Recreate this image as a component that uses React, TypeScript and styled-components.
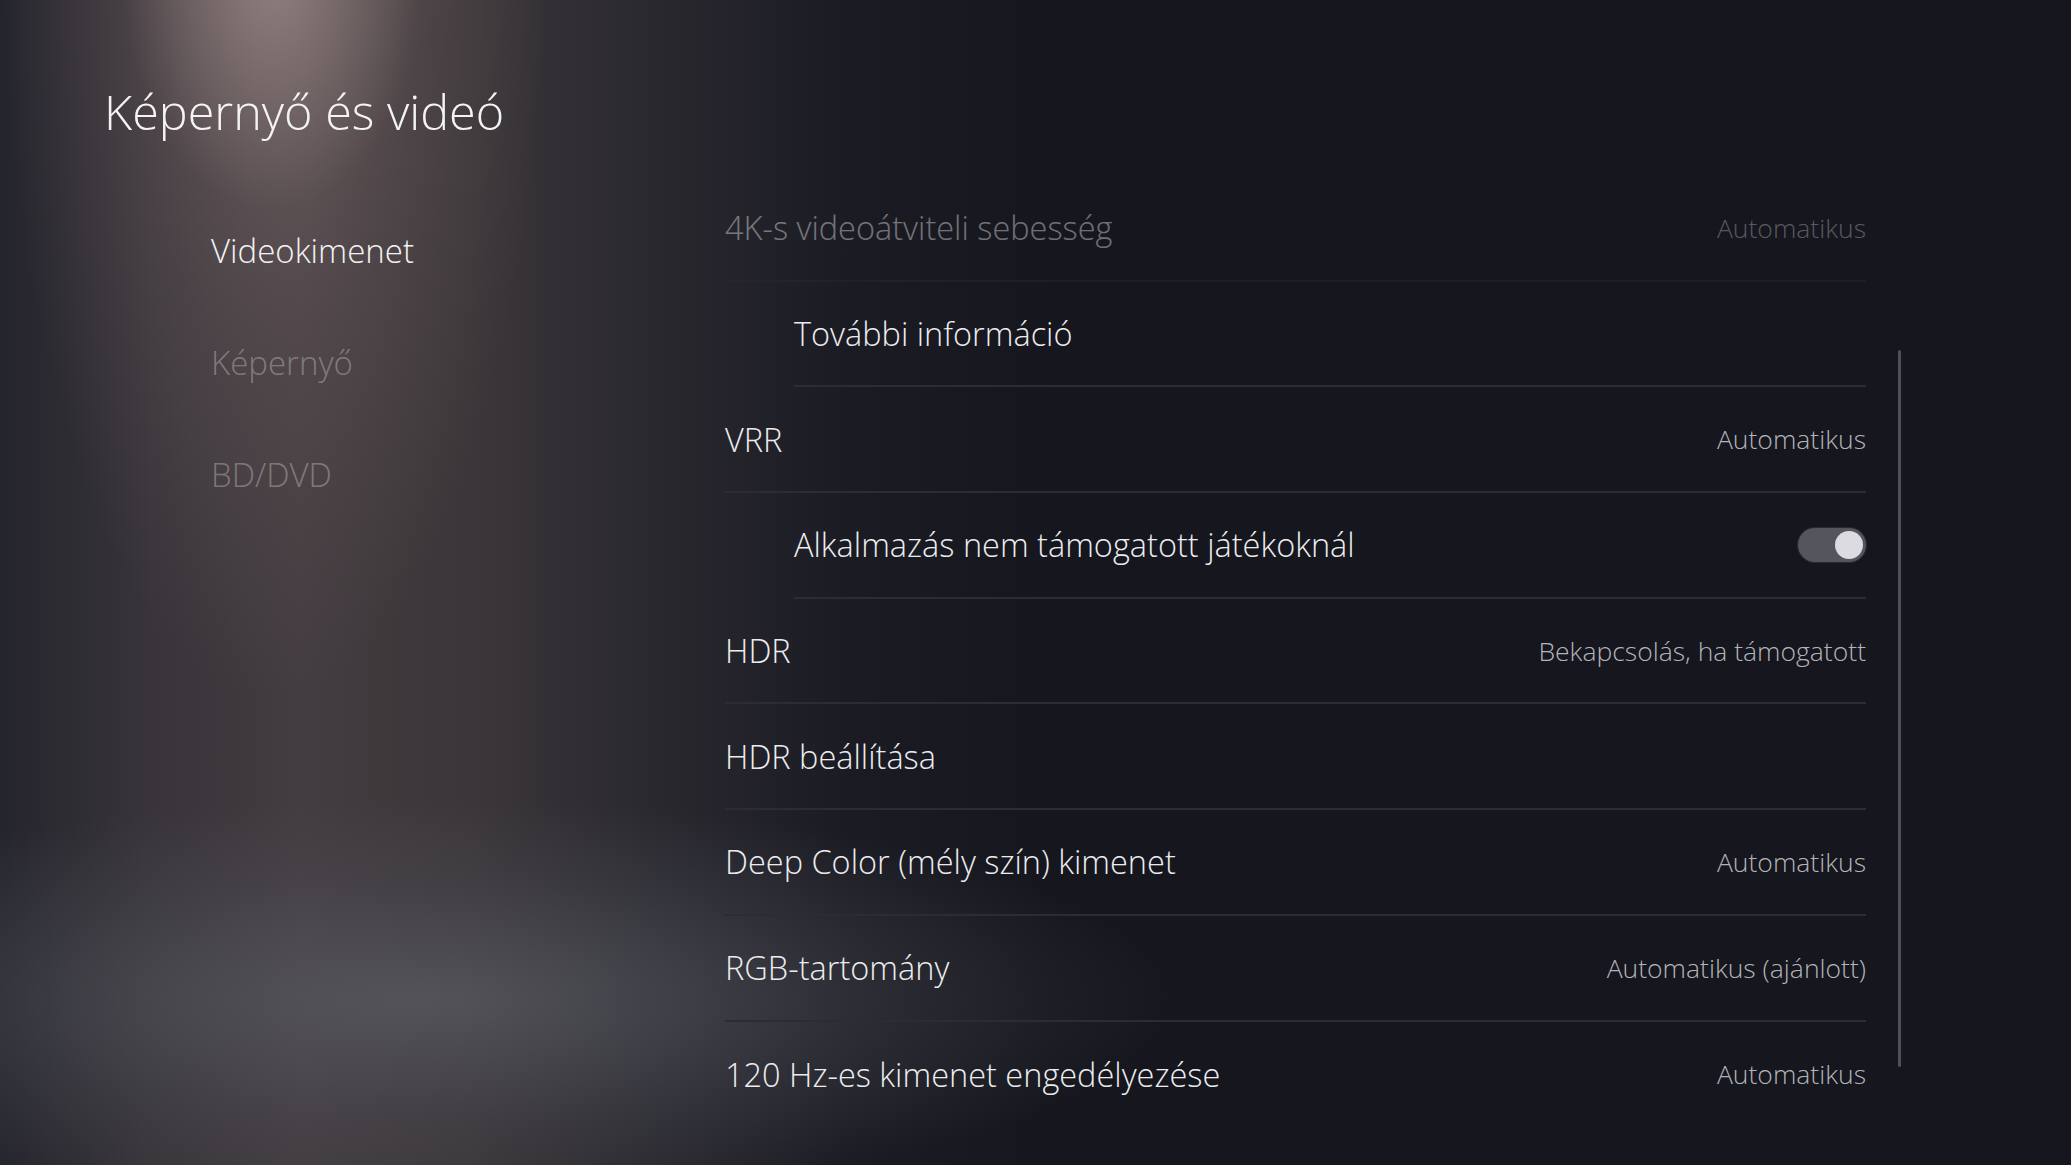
import React from "react";
import styled, { createGlobalStyle } from "styled-components";

const GlobalStyle = createGlobalStyle`
  html, body {
    margin: 0;
    padding: 0;
    background: #15161e;
  }

  * {
    box-sizing: border-box;
  }
`;

const colorBase = "#15161e";
const colorLabel = "#ececee";
const colorValue = "#b3b4b9";
const colorLine = "#2b2c35";

const StyledPage = styled.div`
  width: 2071px;
  height: 1165px;
  overflow: hidden;
  display: flex;
  font-family: "Open Sans", "Noto Sans", sans-serif;
  font-weight: 300;
  color: ${colorLabel};
  background-color: ${colorBase};
  background-image:
    radial-gradient(ellipse 150px 240px at 272px -30px, rgba(175, 155, 152, 0.55), rgba(175, 155, 152, 0) 100%),
    radial-gradient(ellipse 340px 950px at 275px -60px, rgba(135, 116, 115, 0.6), rgba(110, 95, 96, 0.3) 45%, rgba(80, 72, 76, 0) 80%),
    radial-gradient(ellipse 760px 200px at 420px 1000px, rgba(92, 94, 102, 0.7), rgba(80, 82, 90, 0.3) 60%, rgba(70, 72, 80, 0) 100%),
    linear-gradient(90deg, #25252d 0px, #38343a 150px, #433c40 300px, #3b3639 470px, #2a2930 650px, #1b1b23 850px, ${colorBase} 1050px);
`;

const StyledSidebar = styled.div`
  width: 725px;
  flex-shrink: 0;
  padding: 83px 0 0 104px;
  display: flex;
  flex-direction: column;
`;

const StyledTitle = styled.h1`
  margin: 0;
  font-size: 48.5px;
  font-weight: 300;
  line-height: 56px;
  color: #f4f4f4;
`;

const StyledNav = styled.nav`
  margin-top: 92px;
  padding-left: 107px;
  display: flex;
  flex-direction: column;
  gap: 72px;
`;

const StyledNavItem = styled.div<{ $active?: boolean }>`
  font-size: 33px;
  line-height: 40px;
  color: ${(p) => (p.$active ? "#f2f2f2" : "rgba(255, 255, 255, 0.3)")};
`;

const StyledMain = styled.div`
  display: flex;
  padding-top: 176px;
`;

const StyledList = styled.div`
  width: 1141px;
  display: flex;
  flex-direction: column;
`;

const StyledRow = styled.div<{ $sub?: boolean; $faded?: boolean }>`
  height: 105.7px;
  margin-left: ${(p) => (p.$sub ? "69px" : "0")};
  display: flex;
  align-items: center;
  justify-content: space-between;
  border-bottom: 2px solid ${colorLine};
  opacity: ${(p) => (p.$faded ? 0.42 : 1)};

  &:last-child {
    border-bottom: none;
  }
`;

const StyledLabel = styled.span`
  font-size: 32.5px;
  color: ${colorLabel};
`;

const StyledValue = styled.span`
  font-size: 26.5px;
  color: ${colorValue};
`;

const StyledToggle = styled.div<{ $on?: boolean }>`
  width: 68px;
  height: 34px;
  border-radius: 17px;
  background: #54555d;
  box-shadow: 0 0 0 1px #2a2b32;
  display: flex;
  align-items: center;
  justify-content: ${(p) => (p.$on ? "flex-end" : "flex-start")};
  padding: 0 3px;

  &::after {
    content: "";
    width: 28px;
    height: 28px;
    border-radius: 50%;
    background: #dcdce0;
  }
`;

const StyledScrollBar = styled.div`
  width: 3px;
  height: 717px;
  margin: 174px 0 0 32px;
  background: #4e4f57;
  border-radius: 2px;
`;

interface Item {
  label: string;
  value?: string;
  sub?: boolean;
  toggle?: boolean;
  faded?: boolean;
}

const items: Item[] = [
  { label: "4K-s videoátviteli sebesség", value: "Automatikus", faded: true },
  { label: "További információ", sub: true },
  { label: "VRR", value: "Automatikus" },
  { label: "Alkalmazás nem támogatott játékoknál", sub: true, toggle: true },
  { label: "HDR", value: "Bekapcsolás, ha támogatott" },
  { label: "HDR beállítása" },
  { label: "Deep Color (mély szín) kimenet", value: "Automatikus" },
  { label: "RGB-tartomány", value: "Automatikus (ajánlott)" },
  { label: "120 Hz-es kimenet engedélyezése", value: "Automatikus" },
];

const App: React.FC = () => {
  return (
    <>
      <GlobalStyle />
      <StyledPage>
        <StyledSidebar>
          <StyledTitle>Képernyő és videó</StyledTitle>
          <StyledNav>
            <StyledNavItem $active>Videokimenet</StyledNavItem>
            <StyledNavItem>Képernyő</StyledNavItem>
            <StyledNavItem>BD/DVD</StyledNavItem>
          </StyledNav>
        </StyledSidebar>

        <StyledMain>
          <StyledList>
            {items.map((item) => (
              <StyledRow key={item.label} $sub={item.sub} $faded={item.faded}>
                <StyledLabel>{item.label}</StyledLabel>
                {item.value && <StyledValue>{item.value}</StyledValue>}
                {item.toggle && <StyledToggle $on />}
              </StyledRow>
            ))}
          </StyledList>
          <StyledScrollBar />
        </StyledMain>
      </StyledPage>
    </>
  );
};

export default App;
